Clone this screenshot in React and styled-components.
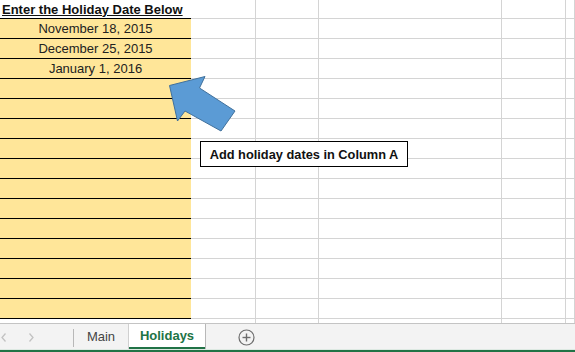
import React from "react";
import styled, { createGlobalStyle } from "styled-components";

const GlobalStyle = createGlobalStyle`
  html, body {
    margin: 0;
    padding: 0;
    background: #ffffff;
    overflow: hidden;
  }
  body {
    font-family: "Liberation Sans", Arial, sans-serif;
  }
`;

// - - - - - - - - - - -
// page frame: sheet on top, tab bar below
const Page = styled.div`
  display: flex;
  flex-direction: column;
  width: 575px;
  height: 352px;
  overflow: hidden;
`;

// - - - - - - - - - - -
// worksheet grid
const Sheet = styled.div`
  position: relative;
  flex: 1;
  overflow: hidden;
  display: grid;
  grid-template-columns: 191px 65px 63px 183px 64px 1fr;
  grid-template-rows: 19px;
  grid-auto-rows: 20px;
  align-content: start;
`;

const Cell = styled.div`
  box-sizing: border-box;
  display: flex;
  align-items: center;
  justify-content: ${(p) => (p.$align === "left" ? "flex-start" : "center")};
  padding-left: ${(p) => (p.$align === "left" ? "2px" : "0")};
  background: ${(p) => (p.$fill ? "#ffe699" : "#ffffff")};
  border-bottom: 1px solid ${(p) => (p.$dark ? "#000000" : "#d4d4d4")};
  border-right: ${(p) => (p.$noRight ? "none" : "1px solid #d4d4d4")};
  font-size: 13px;
  color: #222;
  white-space: nowrap;
`;

const HeaderText = styled.span`
  font-weight: bold;
  text-decoration: underline;
  color: #111;
`;

// - callout box
const Callout = styled.div`
  position: absolute;
  left: 200px;
  top: 141px;
  width: 208px;
  height: 26px;
  box-sizing: border-box;
  border: 1px solid #000;
  background: #fff;
  display: flex;
  align-items: center;
  justify-content: center;
  font-size: 12.8px;
  font-weight: bold;
  color: #111;
`;

const ArrowSvg = styled.svg`
  position: absolute;
  left: 165px;
  top: 72px;
`;

// - - - - - - - - - - -
// sheet tabs
const TabBar = styled.div`
  flex: 0 0 auto;
  height: 29px;
  box-sizing: border-box;
  display: flex;
  align-items: stretch;
  background: #f3f3f3;
  border-top: 1px solid #c4c4c4;
  border-bottom: 2px solid #217346;
  box-shadow: inset 0 -1px 0 #dde9e2;
`;

const NavArrows = styled.div`
  width: 73px;
  display: flex;
  align-items: center;
  gap: 21px;
  padding-left: 1px;
  box-sizing: border-box;
`;

const Separator = styled.div`
  width: 1px;
  align-self: center;
  height: 18px;
  margin-top: 2px;
  background: #b8b8b8;
`;

const Tab = styled.div`
  box-sizing: border-box;
  width: ${(p) => p.$width}px;
  display: flex;
  align-items: center;
  justify-content: center;
  font-size: 13px;
  padding-bottom: 2px;
  color: ${(p) => (p.$active ? "#217346" : "#444444")};
  font-weight: ${(p) => (p.$active ? "bold" : "normal")};
  background: ${(p) => (p.$active ? "#ffffff" : "transparent")};
  border-right: 1px solid ${(p) => (p.$active ? "#b8b8b8" : "transparent")};
  border-left: 1px solid ${(p) => (p.$active ? "#d0d0d0" : "transparent")};
  margin-bottom: ${(p) => (p.$active ? "1px" : "0")};
  box-shadow: ${(p) => (p.$active ? "inset 0 -2px 0 #217346" : "none")};
`;

const AddButton = styled.div`
  margin-left: 32px;
  align-self: center;
  display: flex;
`;

const dates = ["November 18, 2015", "December 25, 2015", "January 1, 2016"];
const ROWS = 17;
const COLS = 6;

const Chevron = ({ dir }) => (
  <svg width="6" height="9" viewBox="0 0 6 9">
    <polyline
      points={dir === "left" ? "4.5,0.5 1,4.5 4.5,8.5" : "1.5,0.5 5,4.5 1.5,8.5"}
      fill="none"
      stroke="#c2c2c2"
      strokeWidth="1.3"
    />
  </svg>
);

export default function App() {
  const cells = [];
  for (let r = 0; r < ROWS; r++) {
    for (let c = 0; c < COLS; c++) {
      const key = `${r}-${c}`;
      if (c === 0) {
        const filled = r >= 1 && r <= 15;
        const dark = r <= 15;
        cells.push(
          <Cell key={key} $fill={filled} $dark={dark} $noRight $align={r === 0 ? "left" : "center"}>
            {r === 0 ? <HeaderText>Enter the Holiday Date Below</HeaderText> : dates[r - 1] || ""}
          </Cell>
        );
      } else {
        cells.push(<Cell key={key} />);
      }
    }
  }

  return (
    <Page>
      <GlobalStyle />
      <Sheet>
        {cells}
        <ArrowSvg width="75" height="64" viewBox="0 0 75 64">
          <polygon
            points="4.5,13.5 40,4.5 34.5,16 70,39 56,59 20,39 12.5,49"
            fill="#5b9bd5"
            stroke="#41719c"
            strokeWidth="1"
            strokeLinejoin="miter"
          />
        </ArrowSvg>
        <Callout>Add holiday dates in Column A</Callout>
      </Sheet>
      <TabBar>
        <NavArrows>
          <Chevron dir="left" />
          <Chevron dir="right" />
        </NavArrows>
        <Separator />
        <Tab $width={54}>Main</Tab>
        <Tab $width={78} $active>
          Holidays
        </Tab>
        <AddButton>
          <svg width="17" height="17" viewBox="0 0 17 17">
            <circle cx="8.5" cy="8.5" r="7.5" fill="none" stroke="#6d6d6d" strokeWidth="1.2" />
            <line x1="8.5" y1="4.5" x2="8.5" y2="12.5" stroke="#6d6d6d" strokeWidth="1.4" />
            <line x1="4.5" y1="8.5" x2="12.5" y2="8.5" stroke="#6d6d6d" strokeWidth="1.4" />
          </svg>
        </AddButton>
      </TabBar>
    </Page>
  );
}
